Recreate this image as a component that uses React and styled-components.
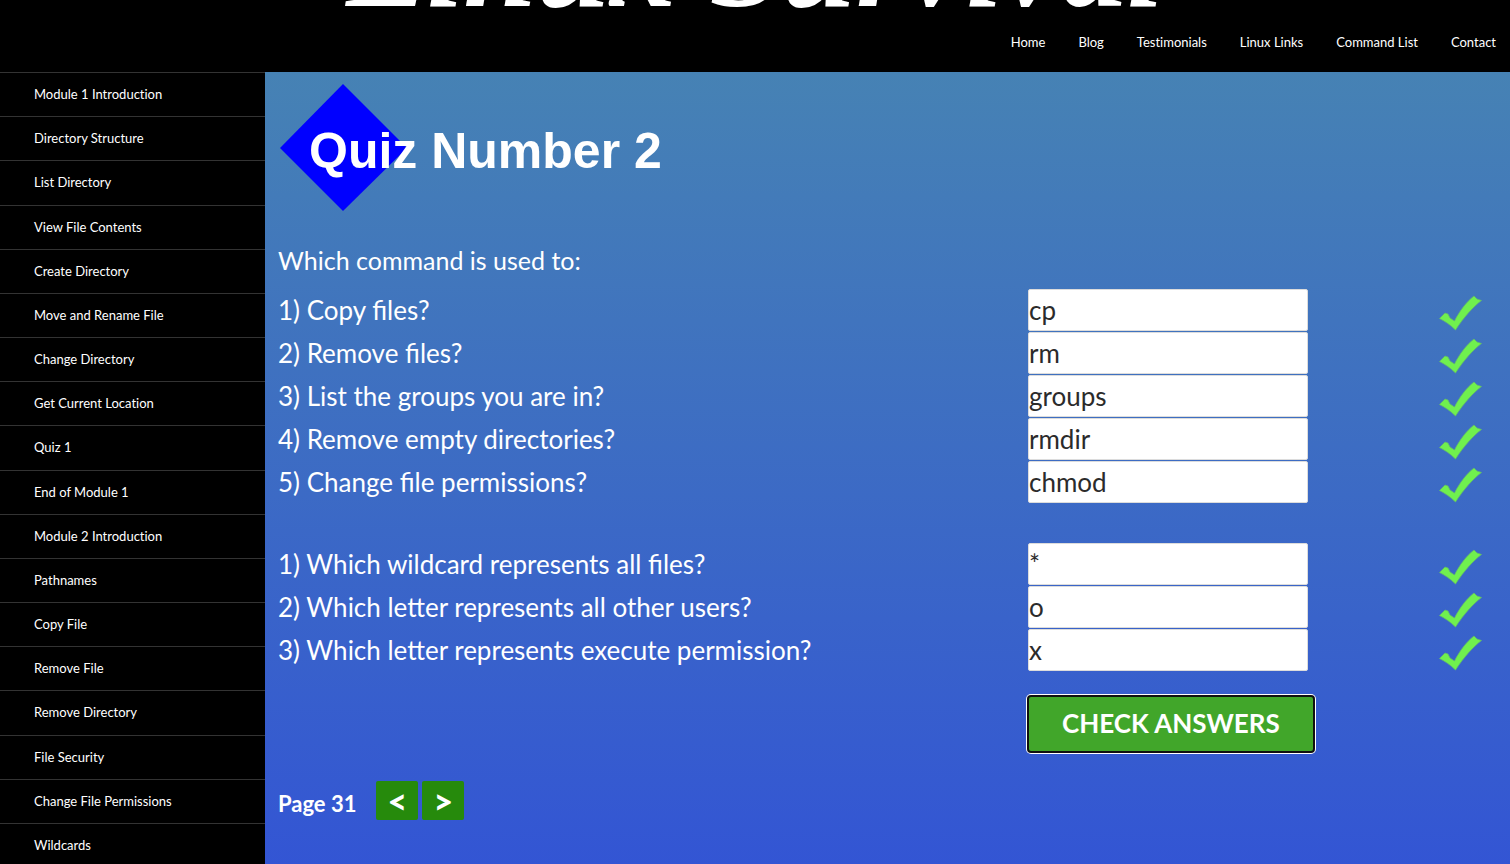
import React from 'react';
import styled, { createGlobalStyle } from 'styled-components';

const GlobalStyle = createGlobalStyle`
  *, *::before, *::after { box-sizing: border-box; }
  html { scrollbar-width: none; }
  body {
    margin: 0;
    background: #000;
    color: #fff;
    font-family: Lato, sans-serif;
  }
`;

const Page = styled.div`
  display: flex;
  flex-direction: column;
  min-height: 100vh;
`;

const Header = styled.header`
  height: 72px;
  background: #000;
`;

const Banner = styled.div`
  display: flex;
  align-items: flex-end;
  justify-content: center;
  height: 32px;
  overflow: hidden;
`;

const SiteTitle = styled.div`
  font: italic bold 132px/140px "Liberation Serif", serif;
  white-space: nowrap;
`;

const TopNav = styled.nav`
  display: flex;
  justify-content: flex-end;
  gap: 33px;
  padding: 0 14px;
`;

const NavLink = styled.a`
  color: #fff;
  font-size: 13px;
  font-variant-ligatures: no-common-ligatures;
  line-height: 20px;
  text-decoration: none;
`;

const Body = styled.div`
  display: flex;
  flex: 1;
`;

const Sidebar = styled.nav`
  display: flex;
  flex: none;
  width: 265px;
  background: #000;
`;

const ModuleList = styled.ul`
  display: flex;
  flex: 1;
  flex-direction: column;
  margin: 0;
  padding: 0;
  list-style: none;
`;

const ModuleItem = styled.li`
  display: flex;
  flex: 1 0 44px;
  border-top: 1px solid #333;
`;

const ModuleLink = styled.a`
  flex: 1;
  padding: 11px 34px;
  color: #fff;
  font-size: 13px;
  font-variant-ligatures: no-common-ligatures;
  line-height: 20px;
  text-decoration: none;
`;

const Main = styled.main`
  flex: 1;
  min-width: 0;
  padding: 12px 13px 47px;
  background: linear-gradient(#4682b4, #3355d4);
`;

const QuizTitle = styled.h1`
  display: flex;
  align-items: center;
  margin: 0 0 28px 1px;
  font: bold 50px/60px "Liberation Sans", Arial, sans-serif;
`;

const Diamond = styled.svg`
  flex: none;
  width: 128px;
  height: 128px;
  margin-right: -98px;
`;

const TitleText = styled.span`
  padding-top: 6px;
`;

const Prompt = styled.p`
  margin: 0 0 9px;
  font-size: 25px;
  line-height: 40px;
`;

const QuestionGroup = styled.div`
  display: grid;
  gap: 1px;
  margin-bottom: ${(p) => (p.$last ? 24 : 40)}px;
`;

const Columns = styled.div`
  display: grid;
  grid-template-columns: 1fr 411px 58px;
  align-items: center;
`;

const Question = styled.label`
  font-size: 26px;
  line-height: 42px;
`;

const Answer = styled.input`
  width: 280px;
  height: 42px;
  padding: 0;
  border: 1px solid #dcdcdc;
  border-radius: 2px;
  background: #fff;
  color: #2b2b2b;
  font-family: Lato, sans-serif;
  font-size: 26px;
`;

const Tick = styled.svg`
  width: 43px;
  height: 36px;
  margin-top: 6px;
`;

const CheckButton = styled.button`
  grid-column: 2;
  justify-self: start;
  height: 58px;
  margin-left: -1px;
  padding: 0 33px 2px;
  border: 2px solid #101010;
  border-radius: 4px;
  background: #41a62a;
  box-shadow: 0 0 0 1px #fff;
  color: #fff;
  font: bold 26px/40px Lato, sans-serif;
  text-transform: uppercase;
`;

const Pager = styled.div`
  display: flex;
  align-items: center;
  gap: 4px;
  margin-top: 28px;
`;

const PageLabel = styled.span`
  margin-right: 16px;
  padding-top: 6px;
  font-size: 22px;
  font-weight: bold;
  line-height: 32px;
`;

const PagerButton = styled.button`
  width: 42px;
  height: 39px;
  padding: 0;
  border: 0;
  border-radius: 2px;
  background: #268a0c;
  color: #fff;
  font: 900 34px/39px Lato, sans-serif;
`;

const links = ['Home', 'Blog', 'Testimonials', 'Linux Links', 'Command List', 'Contact'];

const modules = [
  'Module 1 Introduction', 'Directory Structure', 'List Directory', 'View File Contents',
  'Create Directory', 'Move and Rename File', 'Change Directory', 'Get Current Location',
  'Quiz 1', 'End of Module 1', 'Module 2 Introduction', 'Pathnames', 'Copy File',
  'Remove File', 'Remove Directory', 'File Security', 'Change File Permissions', 'Wildcards',
];

const commandQuestions = [
  ['1) Copy files?', 'cp'],
  ['2) Remove files?', 'rm'],
  ['3) List the groups you are in?', 'groups'],
  ['4) Remove empty directories?', 'rmdir'],
  ['5) Change file permissions?', 'chmod'],
];

const symbolQuestions = [
  ['1) Which wildcard represents all files?', '*'],
  ['2) Which letter represents all other users?', 'o'],
  ['3) Which letter represents execute permission?', 'x'],
];

function Questions({ name, items, last }) {
  return (
    <QuestionGroup $last={last}>
      {items.map(([question, answer], i) => {
        const id = `${name}-${i + 1}`;
        return (
          <Columns key={id}>
            <Question htmlFor={id}>{question}</Question>
            <Answer id={id} type="text" defaultValue={answer} spellCheck={false} />
            <Tick viewBox="0 0 43 36" role="img" aria-label="Correct">
              <path
                d="M0.500 23.500L6 18L9 19L11 23L15.500 26C20 17 27 7 35 1L38 4L42.500 5.500C34 12 25 22 16.500 35C11 29.500 6 26.500 0.500 23.500Z"
                fill="#70f04e"
                stroke="#62b86c"
                strokeWidth="0.8"
              />
            </Tick>
          </Columns>
        );
      })}
    </QuestionGroup>
  );
}

export default function App() {
  return (
    <Page>
      <GlobalStyle />
      <Header>
        <Banner>
          <SiteTitle>Linux Survival</SiteTitle>
        </Banner>
        <TopNav>
          {links.map((l) => <NavLink key={l} href="#">{l}</NavLink>)}
        </TopNav>
      </Header>
      <Body>
        <Sidebar>
          <ModuleList>
            {modules.map((m) => (
              <ModuleItem key={m}><ModuleLink href="#">{m}</ModuleLink></ModuleItem>
            ))}
          </ModuleList>
        </Sidebar>
        <Main>
          <QuizTitle>
            <Diamond viewBox="0 0 128 128" aria-hidden="true">
              <path d="M64 0L128 64L64 127L1 64Z" fill="#00f" />
            </Diamond>
            <TitleText>Quiz Number 2</TitleText>
          </QuizTitle>
          <Prompt>Which command is used to:</Prompt>
          <Questions name="command" items={commandQuestions} />
          <Questions name="symbol" items={symbolQuestions} last />
          <Columns>
            <CheckButton type="button">Check Answers</CheckButton>
          </Columns>
          <Pager>
            <PageLabel>Page 31</PageLabel>
            <PagerButton type="button" aria-label="Previous page">&lt;</PagerButton>
            <PagerButton type="button" aria-label="Next page">&gt;</PagerButton>
          </Pager>
        </Main>
      </Body>
    </Page>
  );
}
